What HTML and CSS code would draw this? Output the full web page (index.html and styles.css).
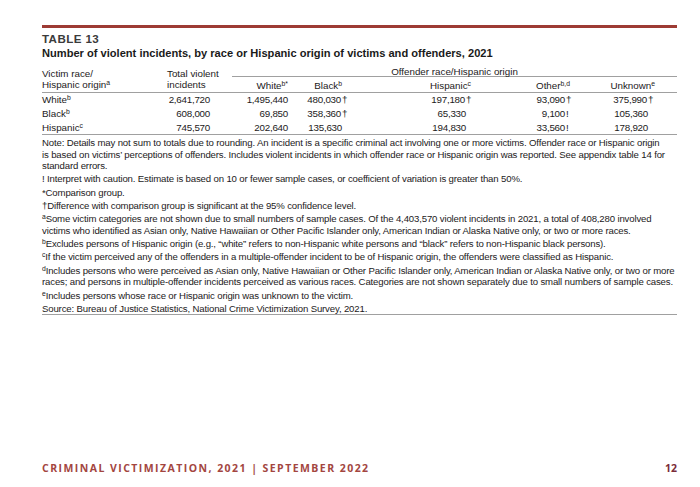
FILE: index.html
```html
<!DOCTYPE html>
<html lang="en">
<head>
<meta charset="utf-8">
<title>Table 13</title>
<link rel="stylesheet" href="styles.css">
</head>
<body>
<div class="page">
  <div class="content">
    <div class="label">TABLE 13</div>
    <h1 class="title">Number of violent incidents, by race or Hispanic origin of victims and offenders, 2021</h1>
    <div class="tbl">
      <div class="h-victim">Victim race/<br>Hispanic origin<sup>a</sup></div>
      <div class="h-total">Total violent<br>incidents</div>
      <div class="h-off">Offender race/Hispanic origin</div>
      <div class="h-col">White<sup>b*</sup></div>
      <div class="h-col">Black<sup>b</sup></div>
      <div class="h-col">Hispanic<sup>c</sup></div>
      <div class="h-col">Other<sup>b,d</sup></div>
      <div class="h-col">Unknown<sup>e</sup></div>
      <div class="h-col"></div>

      <div class="c-lab">White<sup>b</sup></div>
      <div class="c-num">2,641,720</div>
      <div class="c-num">1,495,440</div>
      <div class="c-num">480,030<span class="mk">†</span></div>
      <div class="c-num p5">197,180<span class="mk">†</span></div>
      <div class="c-num p4">93,090<span class="mk">†</span></div>
      <div class="c-num p7">375,990<span class="mk">†</span></div>
      <div class="c-fill"></div>

      <div class="c-lab">Black<sup>b</sup></div>
      <div class="c-num">608,000</div>
      <div class="c-num">69,850</div>
      <div class="c-num">358,360<span class="mk">†</span></div>
      <div class="c-num p5">65,330</div>
      <div class="c-num p4">9,100<span class="mk">!</span></div>
      <div class="c-num p7">105,360</div>
      <div class="c-fill"></div>

      <div class="c-lab last">Hispanic<sup>c</sup></div>
      <div class="c-num last">745,570</div>
      <div class="c-num last">202,640</div>
      <div class="c-num last">135,630</div>
      <div class="c-num p5 last">194,830</div>
      <div class="c-num p4 last">33,560<span class="mk">!</span></div>
      <div class="c-num p7 last">178,920</div>
      <div class="c-fill last"></div>
    </div>
    <div class="notes">
      <p>Note: Details may not sum to totals due to rounding. An incident is a specific criminal act involving one or more victims. Offender race or Hispanic origin<br>is based on victims’ perceptions of offenders. Includes violent incidents in which offender race or Hispanic origin was reported. See appendix table 14 for<br>standard errors.</p>
      <p>! Interpret with caution. Estimate is based on 10 or fewer sample cases, or coefficient of variation is greater than 50%.</p>
      <p>*Comparison group.</p>
      <p>†Difference with comparison group is significant at the 95% confidence level.</p>
      <p><sup>a</sup>Some victim categories are not shown due to small numbers of sample cases. Of the 4,403,570 violent incidents in 2021, a total of 408,280 involved<br>victims who identified as Asian only, Native Hawaiian or Other Pacific Islander only, American Indian or Alaska Native only, or two or more races.</p>
      <p><sup>b</sup>Excludes persons of Hispanic origin (e.g., “white” refers to non-Hispanic white persons and “black” refers to non-Hispanic black persons).</p>
      <p><sup>c</sup>If the victim perceived any of the offenders in a multiple-offender incident to be of Hispanic origin, the offenders were classified as Hispanic.</p>
      <p><sup>d</sup>Includes persons who were perceived as Asian only, Native Hawaiian or Other Pacific Islander only, American Indian or Alaska Native only, or two or more<br>races; and persons in multiple-offender incidents perceived as various races. Categories are not shown separately due to small numbers of sample cases.</p>
      <p><sup>e</sup>Includes persons whose race or Hispanic origin was unknown to the victim.</p>
      <p>Source: Bureau of Justice Statistics, National Crime Victimization Survey, 2021.</p>
    </div>
  </div>
  <footer class="footer">
    <span class="running">CRIMINAL VICTIMIZATION, 2021 | SEPTEMBER 2022</span>
    <span class="pageno">12</span>
  </footer>
</div>
</body>
</html>
```

FILE: styles.css
```css
html, body {
  margin: 0;
  padding: 0;
  background: #ffffff;
}

body {
  font-family: "Liberation Sans", Arial, sans-serif;
  color: #1c1a1b;
}

.page {
  width: 700px;
  height: 487px;
  display: flex;
  flex-direction: column;
  box-sizing: border-box;
  padding: 25px 23px 0 42px;
}

.content {
  width: 635px;
  flex: 0 0 auto;
  border-top: 3px solid #9d3b34;
}

.label {
  margin-top: 4px;
  font-size: 11.6px;
  line-height: 13px;
  font-weight: bold;
  letter-spacing: 0.4px;
  color: #3b3b3b;
}

.title {
  margin: 1px 0 0 0;
  font-size: 11.1px;
  line-height: 14px;
  font-weight: bold;
  color: #1a1a1a;
}

sup {
  font-size: 6.8px;
  line-height: 0;
  vertical-align: 3px;
}

.tbl {
  margin-top: 6px;
  display: grid;
  grid-template-columns: 83px 85px 78px 54px 129px 99px 85px 22px;
  grid-template-rows: 11px 16px 14px 14px 14px;
  font-size: 9.8px;
  line-height: 11px;
}

.h-victim {
  grid-row: 1 / 3;
  grid-column: 1;
  align-self: end;
  white-space: nowrap;
  padding-bottom: 2px;
  border-bottom: 1px solid #a0a0a0;
}

.h-total {
  grid-row: 1 / 3;
  grid-column: 2;
  align-self: end;
  white-space: nowrap;
  padding-left: 42px;
  padding-bottom: 2px;
  border-bottom: 1px solid #a0a0a0;
}

.h-off {
  grid-row: 1;
  grid-column: 3 / 9;
  margin-left: 22px;
  text-align: center;
  white-space: nowrap;
  border-bottom: 1px solid #a0a0a0;
}

.h-col {
  grid-row: 2;
  text-align: right;
  white-space: nowrap;
  padding-top: 3px;
  padding-bottom: 2px;
  border-bottom: 1px solid #a0a0a0;
}

.c-lab,
.c-num,
.c-fill {
  line-height: 14px;
  white-space: nowrap;
}

.c-num {
  text-align: right;
  letter-spacing: -0.25px;
}

.c-num.p4 { padding-right: 4px; }
.c-num.p5 { padding-right: 5px; }
.c-num.p7 { padding-right: 7px; }

.last {
  border-bottom: 1px solid #a0a0a0;
}

.mk {
  display: inline-block;
  width: 0;
  padding-left: 1px;
  text-align: left;
  letter-spacing: 0;
}

.notes {
  padding-top: 2px;
  padding-bottom: 0;
  border-bottom: 1px solid #a0a0a0;
  font-size: 9.6px;
  letter-spacing: -0.15px;
  line-height: 11.55px;
  white-space: nowrap;
}

.notes p {
  margin: 0 0 1.75px 0;
}

.notes p:last-child {
  margin-bottom: 0;
}

.footer {
  margin-top: auto;
  width: 635px;
  display: flex;
  justify-content: space-between;
  align-items: baseline;
  padding-bottom: 12px;
  font-family: "Open Sans", "Liberation Sans", sans-serif;
  font-weight: bold;
  font-size: 10.5px;
  line-height: 13px;
}

.running {
  color: #a3463f;
  letter-spacing: 1.45px;
}

.pageno {
  color: #7a2c38;
}
```
